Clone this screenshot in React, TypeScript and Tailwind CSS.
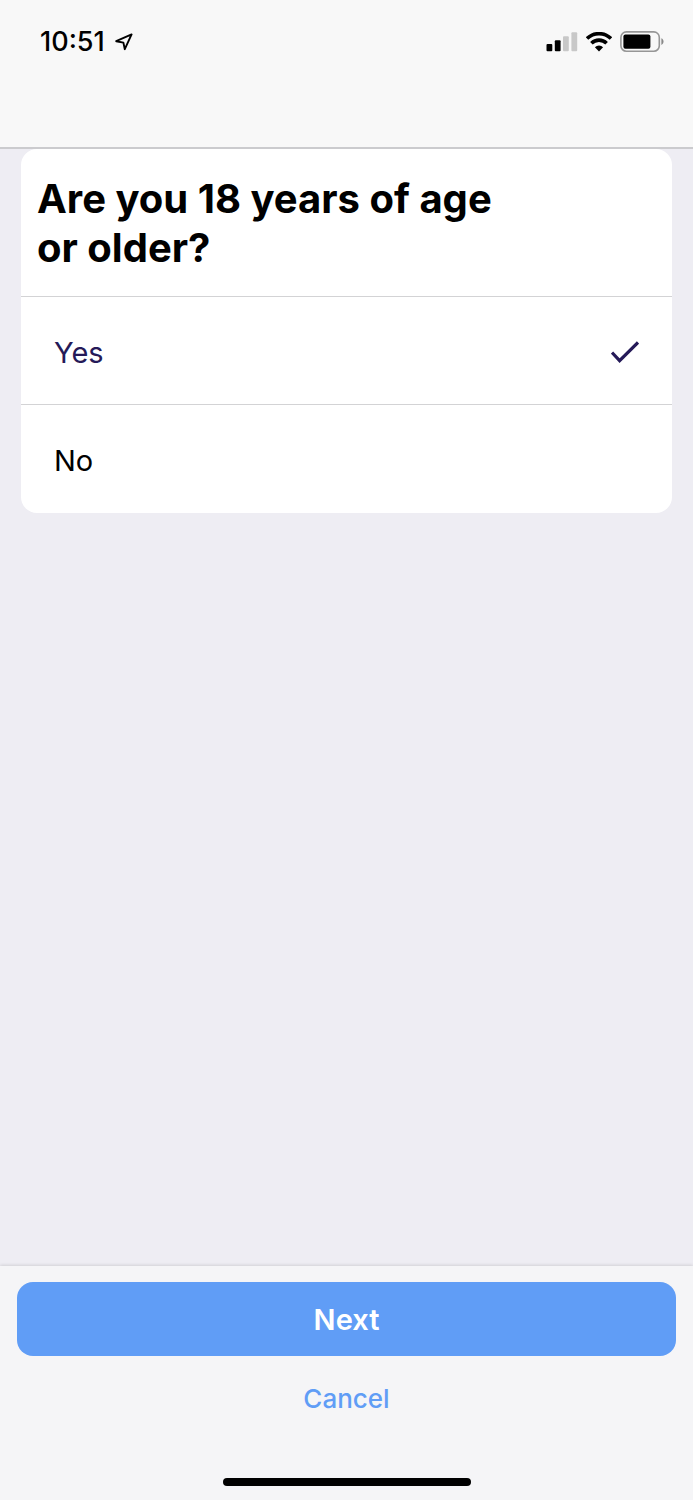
import React, { useState } from 'react'

const options = ['Yes', 'No']

function LocationIcon() {
  return (
    <svg width="18" height="18" viewBox="0 0 18 18" fill="none" stroke="#000" strokeWidth="1.9" strokeLinejoin="round" aria-hidden="true">
      <path d="M1.2 8.2 16.6 1.4 9.8 16.2 8.4 9.6Z" />
    </svg>
  )
}

function SignalIcon() {
  return (
    <svg width="32" height="20" viewBox="0 0 32 20" aria-hidden="true">
      <rect x="0.5" y="12" width="5.8" height="7.2" rx="1" fill="#000" />
      <rect x="8.8" y="8.2" width="5.8" height="11" rx="1" fill="#000" />
      <rect x="17" y="4.2" width="5.8" height="15" rx="1" fill="#c8c8c8" />
      <rect x="25.4" y="0.2" width="5.8" height="19" rx="1" fill="#c8c8c8" />
    </svg>
  )
}

function WifiIcon() {
  return (
    <svg width="26" height="20" viewBox="0 0 26 20" aria-hidden="true">
      <g fill="none" stroke="#000" strokeWidth="3.6">
        <path d="M1 6.6a17 17 0 0 1 24 0" />
        <path d="M5.4 11.3a10.8 10.8 0 0 1 15.2 0" />
      </g>
      <path d="M8.9 15.2a5.8 5.8 0 0 1 8.2 0L13 19.4Z" fill="#000" />
    </svg>
  )
}

function BatteryIcon() {
  return (
    <svg width="44" height="22" viewBox="0 0 44 22" aria-hidden="true">
      <rect x="0.9" y="0.9" width="38.4" height="19.4" rx="5.5" fill="none" stroke="#969696" strokeWidth="1.6" />
      <rect x="3.4" y="3.4" width="27" height="14.4" rx="2" fill="#000" />
      <path d="M41.4 7.2c2.8 1.2 2.8 5.6 0 6.8Z" fill="#888" />
    </svg>
  )
}

function CheckIcon() {
  return (
    <svg width="28" height="24" viewBox="0 0 28 24" fill="none" stroke="currentColor" strokeWidth="3.2" aria-hidden="true">
      <path d="M1 11.6 8.6 19.6 27 1.4" />
    </svg>
  )
}

export default function App() {
  const [answer, setAnswer] = useState('Yes')

  return (
    <div className="flex min-h-screen flex-col bg-[#eeedf3] font-[Inter,sans-serif] text-black">
      <header className="h-[149px] border-b-2 border-[#cbcbce] bg-[#f8f8f8]">
        <div className="flex items-center justify-between pt-6 pr-[29px] pl-10">
          <div className="flex items-center gap-2.5">
            <span className="text-[27px] leading-9 font-medium">10:51</span>
            <LocationIcon />
          </div>
          <div className="flex items-center gap-2">
            <SignalIcon />
            <WifiIcon />
            <BatteryIcon />
          </div>
        </div>
      </header>

      <main className="flex-1 px-[21px]">
        <fieldset className="overflow-hidden rounded-2xl bg-white pb-px" aria-labelledby="question">
          <h1 id="question" className="max-w-[500px] px-4 pt-[25px] pb-6 text-[40px] leading-[49px] font-bold">
            Are you 18 years of age or older?
          </h1>
          {options.map((option) => (
            <label
              key={option}
              className={`flex h-[108px] cursor-pointer items-center justify-between border-t border-[#d3d3d5] px-[33px] pt-1 text-[29px] ${answer === option ? 'text-[#251a58]' : 'text-black'}`}
            >
              <input
                type="radio"
                name="age"
                value={option}
                checked={answer === option}
                onChange={() => setAnswer(option)}
                className="sr-only"
              />
              {option}
              {answer === option && <CheckIcon />}
            </label>
          ))}
        </fieldset>
      </main>

      <footer className="flex flex-col items-center bg-[#f5f5f7] px-[17px] pt-4 pb-[14px] shadow-[0_-1px_3px_rgba(0,0,0,0.12)]">
        <button type="button" className="h-[74px] w-full rounded-2xl bg-[#609df6] pt-0.5 text-[29px] font-semibold text-white">
          Next
        </button>
        <button type="button" className="mt-[18px] h-12 px-6 text-[26px] font-medium text-[#609df6]">
          Cancel
        </button>
        <div className="mt-14 h-2 w-[248px] rounded-full bg-black" />
      </footer>
    </div>
  )
}
